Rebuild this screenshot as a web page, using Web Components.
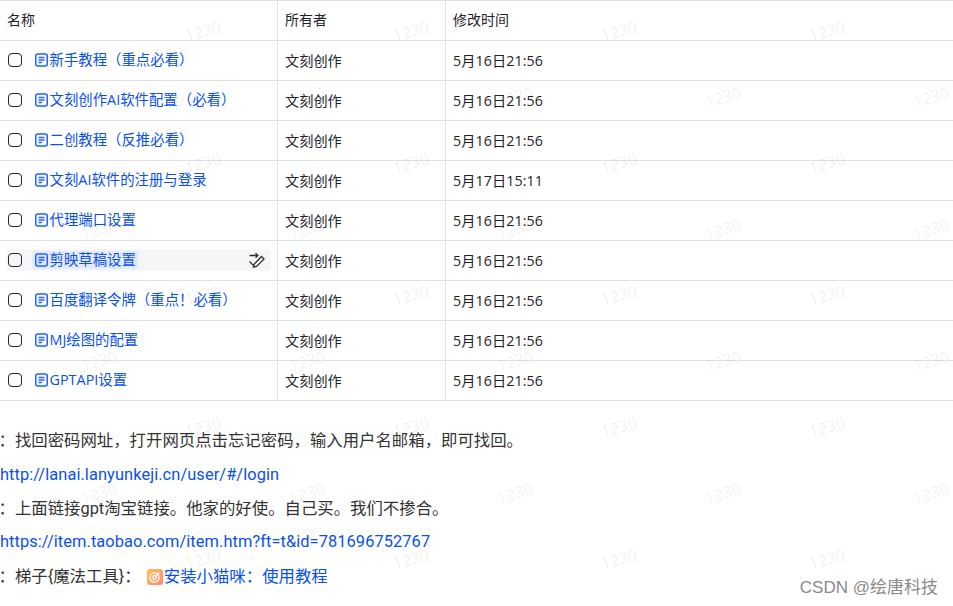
<!DOCTYPE html>
<html><head><meta charset="utf-8">
<style>
html,body{margin:0;padding:0;background:#fff;height:606px;overflow:hidden}
body{font-family:"Noto Sans CJK SC","Open Sans",sans-serif;position:relative}
</style></head><body>
<doc-page></doc-page>
<script>
const FONT='"Open Sans","Noto Sans CJK SC",sans-serif';
const FONT2='Roboto,"Noto Sans CJK SC",sans-serif';
class DocIcon extends HTMLElement{constructor(){super();this.attachShadow({mode:'open'}).innerHTML=`<style>:host{display:inline-flex;width:13px;height:14px;flex:none}svg{display:block}</style><svg width="13" height="14" viewBox="0 0 13 14" fill="none"><rect x=".75" y="1" width="11.5" height="12" rx="2" stroke="#1f62ff" stroke-width="1.5"/><path d="M3.5 4.5h6M3.5 7h6M3.5 9.5h3.5" stroke="#1f62ff" stroke-width="1.3"/></svg>`}}
customElements.define('doc-icon',DocIcon);
class EditIcon extends HTMLElement{constructor(){super();this.attachShadow({mode:'open'}).innerHTML=`<style>:host{display:inline-flex;flex:none}svg{display:block}</style><svg width="17" height="18" viewBox="0 0 17 18" fill="none" stroke="#2b2f36" stroke-width="1.3"><path d="M1.5 4.5h8M7.5 2.3l2.4 2.2-2.4 2.2"/><path d="M13.5 5.5l2.5 2.4-7.5 7.6-3 .7.6-3z"/><path d="M1.5 10.5l5 5"/></svg>`}}
customElements.define('edit-icon',EditIcon);
class ChkBox extends HTMLElement{constructor(){super();this.attachShadow({mode:'open'}).innerHTML=`<style>:host{display:block;box-sizing:border-box;width:14px;height:14px;border:1.3px solid #1f2329;border-radius:4px;flex:none;position:relative;z-index:1}</style>`}}
customElements.define('chk-box',ChkBox);
class FileRow extends HTMLElement{
 constructor(){super();this.attachShadow({mode:'open'})}
 connectedCallback(){const hl=this.hasAttribute('hover');
  this.shadowRoot.innerHTML=`<style>
  :host{display:grid;grid-template-columns:278px 168px 1fr;height:40px;border-bottom:1px solid #dee0e3;box-sizing:border-box;font:14.2px/20px ${FONT};color:#1f2329}
  .c{display:flex;align-items:center;padding:0 0 0 7px;border-right:1px solid #dee0e3;box-sizing:border-box;white-space:nowrap}
  .c:last-child{border-right:0;letter-spacing:.1px}
  .txt{padding-top:1px}
  .name{padding:0 6px 2px 0}
  chk-box{margin:0 12px 0 8px}
  .in{flex:1;display:flex;align-items:center;height:22px;border-radius:4px;margin-left:-28px;padding-left:28px;${hl?'background:#f5f6f7;':''}}
  .t{display:flex;align-items:center;gap:1.5px;color:#0a50ec;font-size:14.4px;border-radius:3px;${hl?'background:#e1eaff;margin-left:-2px;padding:0 2px 0 3px;':'padding-left:1px;'}line-height:18px;height:18px}
  edit-icon{margin-left:auto;margin-right:6px}
  </style><div class="c name"><chk-box></chk-box><div class="in"><span class="t"><doc-icon></doc-icon><slot></slot></span>${hl?'<edit-icon></edit-icon>':''}</div></div><div class="c txt">文刻创作</div><div class="c txt">${this.getAttribute('time')}</div>`}}
customElements.define('file-row',FileRow);
class HeadRow extends HTMLElement{constructor(){super();this.attachShadow({mode:'open'}).innerHTML=`<style>
  :host{display:grid;grid-template-columns:278px 168px 1fr;height:41px;border-top:1px solid #dee0e3;border-bottom:1px solid #dee0e3;box-sizing:border-box;font:14px/20px ${FONT};color:#1f2329}
  div{display:flex;align-items:center;padding:0 0 2px 7px;border-right:1px solid #dee0e3}
  div:first-child{padding-left:8px}
  div:last-child{border-right:0}
  </style><div>名称</div><div>所有者</div><div>修改时间</div>`}}
customElements.define('head-row',HeadRow);
class NoteLine extends HTMLElement{constructor(){super();this.attachShadow({mode:'open'}).innerHTML=`<style>:host{display:block;height:33.75px;font:16.4px/33.75px ${FONT2};color:#333;white-space:nowrap}:host([shift]){margin-left:-1.5px}:host([link]){letter-spacing:.08px}</style><slot></slot>`}}
customElements.define('note-line',NoteLine);
class CatIcon extends HTMLElement{constructor(){super();this.attachShadow({mode:'open'}).innerHTML=`<style>:host{display:inline-block;width:16px;height:16px;vertical-align:-3px;margin:0 1px 0 2px}svg{display:block}</style><svg width="16" height="16" viewBox="0 0 16 16"><defs><linearGradient id="g" x1="0" y1="0" x2="1" y2="1"><stop offset="0" stop-color="#ffc04d"/><stop offset="1" stop-color="#ff8a7a"/></linearGradient></defs><rect width="16" height="16" rx="3" fill="url(#g)"/><circle cx="7.5" cy="8.5" r="4.6" fill="none" stroke="#fff" stroke-width="1.3"/><circle cx="7.5" cy="8.5" r="1.8" fill="none" stroke="#fff" stroke-width="1.2"/><path d="M8 8l4.5-4.5" stroke="#fff" stroke-width="1.2"/></svg>`}}
customElements.define('cat-icon',CatIcon);
class WaterMark extends HTMLElement{constructor(){super();const s=this.attachShadow({mode:'open'});
 let h=`<style>:host{position:absolute;inset:0;overflow:hidden;pointer-events:none;display:block}span{position:absolute;font:16px "Open Sans",sans-serif;color:rgba(0,0,0,.07);transform:translate(-50%,-50%) rotate(-15deg)}</style>`;
 for(let r=0;r<9;r++){const y=31+r*66;for(let i=0;i<5;i++){const x=(r%2?99:203)+i*208;if(x<960)h+=`<span style="left:${x}px;top:${y}px">1230</span>`}}
 s.innerHTML=h}}
customElements.define('water-mark',WaterMark);
class CsdnMark extends HTMLElement{constructor(){super();this.attachShadow({mode:'open'}).innerHTML=`<style>:host{position:absolute;right:15px;top:576px;font:17px/24px "Liberation Sans","Noto Sans CJK SC",sans-serif;color:#8a8a8a;white-space:nowrap}</style>CSDN @绘唐科技`}}
customElements.define('csdn-mark',CsdnMark);
class DocPage extends HTMLElement{constructor(){super();this.attachShadow({mode:'open'}).innerHTML=`<style>:host{display:block;position:relative;width:953px;height:606px;overflow:hidden;background:#fff}
 .notes{padding-top:23px}.last{padding-top:1px}a{color:#0a50ec;text-decoration:none}</style>
 <head-row></head-row>
 <file-row time="5月16日21:56">新手教程（重点必看）</file-row>
 <file-row time="5月16日21:56">文刻创作AI软件配置（必看）</file-row>
 <file-row time="5月16日21:56">二创教程（反推必看）</file-row>
 <file-row time="5月17日15:11">文刻AI软件的注册与登录</file-row>
 <file-row time="5月16日21:56">代理端口设置</file-row>
 <file-row hover time="5月16日21:56">剪映草稿设置</file-row>
 <file-row time="5月16日21:56">百度翻译令牌（重点！必看）</file-row>
 <file-row time="5月16日21:56">MJ绘图的配置</file-row>
 <file-row time="5月16日21:56">GPTAPI设置</file-row>
 <div class="notes">
 <note-line shift>：找回密码网址，打开网页点击忘记密码，输入用户名邮箱，即可找回。</note-line>
 <note-line link><a href="#">http://lanai.lanyunkeji.cn/user/#/login</a></note-line>
 <note-line shift>：上面链接gpt淘宝链接。他家的好使。自己买。我们不掺合。</note-line>
 <note-line link><a href="#">https://item.taobao.com/item.htm?ft=t&amp;id=781696752767</a></note-line>
 <div class="last"><note-line shift>：梯子{魔法工具}： <cat-icon></cat-icon><a href="#">安装小猫咪：使用教程</a></note-line></div>
 </div>
 <water-mark></water-mark><csdn-mark></csdn-mark>`}}
customElements.define('doc-page',DocPage);
</script></body></html>
